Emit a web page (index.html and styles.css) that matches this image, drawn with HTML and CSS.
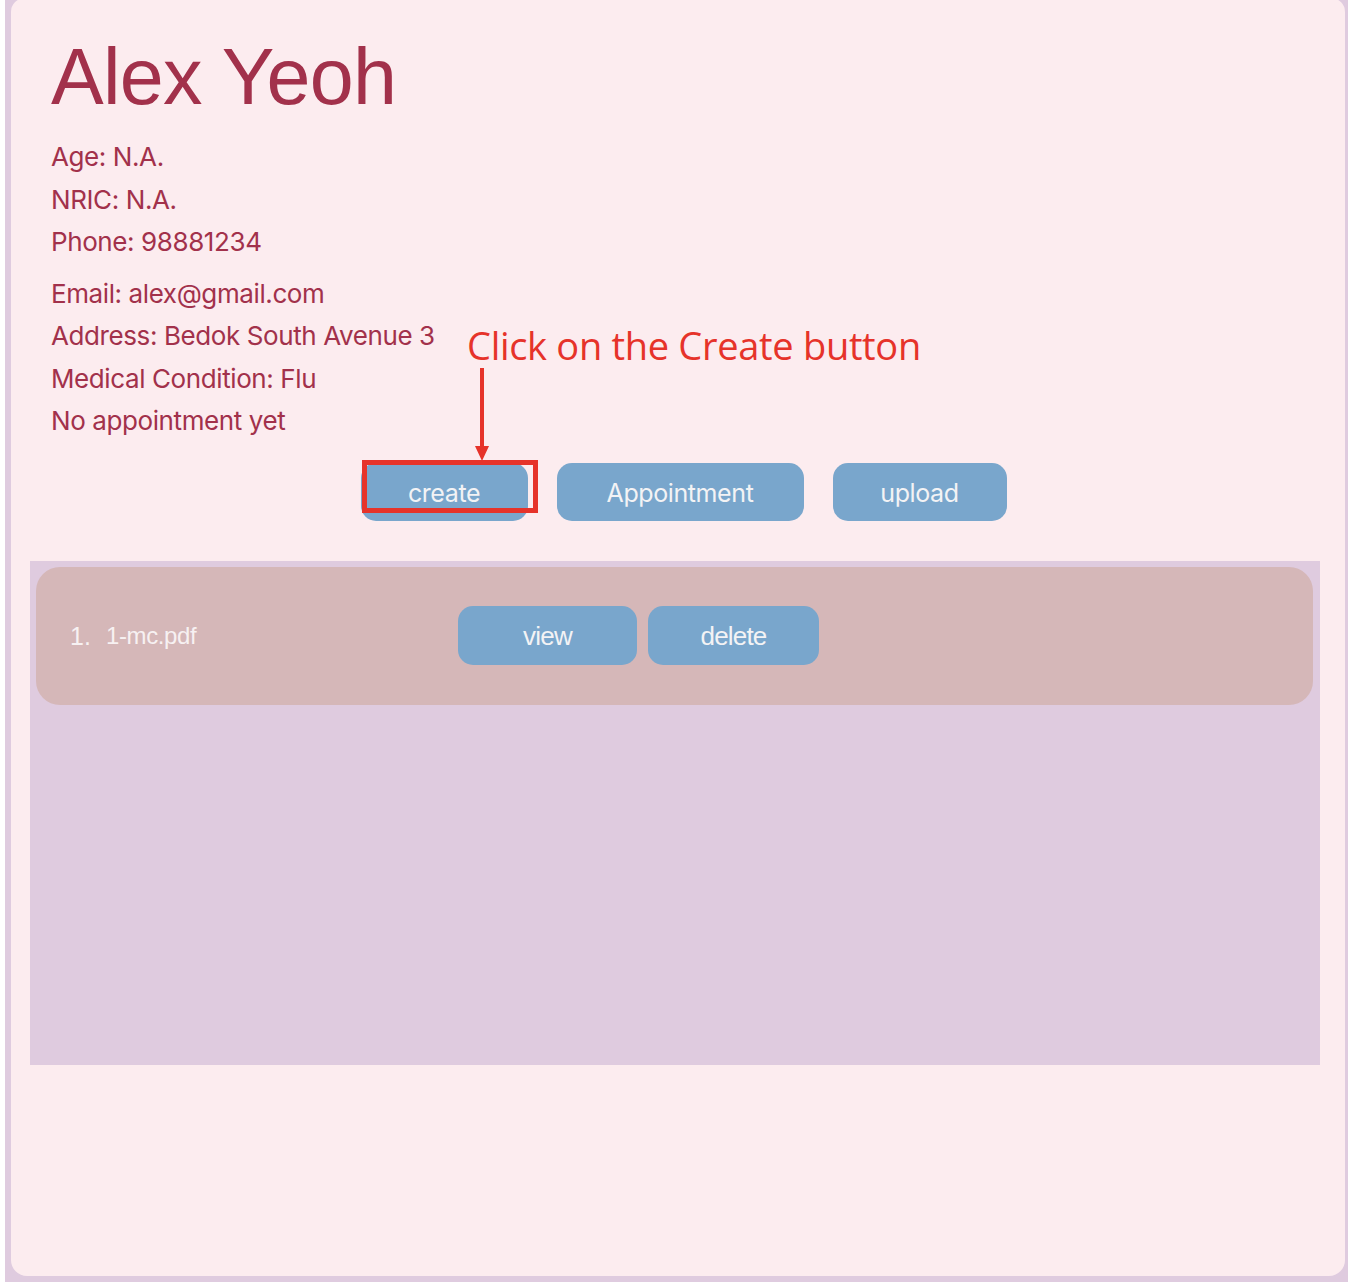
FILE: index.html
```html
<!DOCTYPE html>
<html lang="en">
<head>
<meta charset="utf-8">
<title>Alex Yeoh</title>
<link rel="stylesheet" href="styles.css">
</head>
<body>
<div class="frame">
  <div class="card">
    <header class="header">
      <h1 class="name">Alex Yeoh</h1>
      <div class="details">
        <div class="group">
          <p>Age: N.A.</p>
          <p>NRIC: N.A.</p>
          <p>Phone: 98881234</p>
        </div>
        <div class="group">
          <p>Email: alex@gmail.com</p>
          <p>Address: Bedok South Avenue 3</p>
          <p>Medical Condition: Flu</p>
          <p>No appointment yet</p>
        </div>
      </div>
      <div class="actions">
        <button class="btn btn-create">create</button>
        <button class="btn btn-appt">Appointment</button>
        <button class="btn btn-upload">upload</button>
      </div>
    </header>
    <section class="files">
      <div class="file-row">
        <span class="idx">1.</span>
        <span class="fname">1-mc.pdf</span>
        <div class="row-actions">
          <button class="rbtn rbtn-view">view</button>
          <button class="rbtn rbtn-delete">delete</button>
        </div>
      </div>
    </section>
  </div>
  <div class="annotation">
    <span class="note">Click on the Create button</span>
    <svg class="arrow" width="20" height="96" viewBox="0 0 20 96">
      <line x1="10" y1="0" x2="10" y2="82" stroke="#e6332a" stroke-width="4"/>
      <polygon points="3,78 17,78 10,93" fill="#e6332a"/>
    </svg>
    <div class="highlight"></div>
  </div>
</div>
</body>
</html>
```

FILE: styles.css
```css
html {
  background: #ffffff;
}
body {
  margin: 0 0 0 5px;
  background: #dfcbdf;
  height: 1282px;
  overflow: hidden;
}
.frame {
  position: relative;
  padding: 0 3px 0 6px;
}
.card {
  background: #fcecef;
  border-radius: 0 0 16px 16px;
  border-top-left-radius: 14px;
  border-top-right-radius: 14px;
  height: 1278px;
  box-sizing: border-box;
  padding: 0 25px 0 19px;
  margin-top: -2px;
}
.header {
  padding: 34px 0 0 21px;
}
.name {
  margin: 0;
  font-family: "Liberation Sans", Arial, sans-serif;
  font-weight: 400;
  font-size: 79px;
  line-height: 90px;
  letter-spacing: -0.7px;
  color: #a2314b;
}
.details {
  margin-top: 14px;
  font-family: Inter, "Noto Sans", sans-serif;
  font-size: 26px;
  letter-spacing: -0.4px;
  color: #a2314b;
}
.details p {
  margin: 0;
  line-height: 42.5px;
}
.group + .group {
  margin-top: 9px;
}
.actions {
  display: flex;
  justify-content: center;
  gap: 29px;
  padding-right: 4px;
  margin-top: 20px;
}
.btn {
  height: 58px;
  border: none;
  border-radius: 15px;
  background: #79a6cc;
  color: #f3f3f5;
  font-family: Inter, "Noto Sans", sans-serif;
  font-size: 25px;
  letter-spacing: -0.4px;
  padding: 2px 0 0;
}
.btn-create { width: 167px; }
.btn-appt { width: 247px; }
.btn-upload { width: 174px; }
.files {
  margin-top: 40px;
  height: 504px;
  background: #dfcbdf;
  padding: 6px 7px 0 6px;
  box-sizing: border-box;
}
.file-row {
  height: 138px;
  border-radius: 24px;
  background: #d5b7b8;
  display: flex;
  align-items: center;
  padding-left: 34px;
  color: #f7f1f2;
}
.idx {
  font-family: "Liberation Sans", Arial, sans-serif;
  font-size: 25px;
  width: 36px;
  padding-top: 2px;
}
.fname {
  font-family: "Liberation Sans", Arial, sans-serif;
  font-size: 24px;
  letter-spacing: -0.4px;
  width: 352px;
}
.row-actions {
  display: flex;
  gap: 11px;
  margin-top: 0;
}
.rbtn {
  height: 59px;
  border: none;
  border-radius: 15px;
  background: #79a6cc;
  color: #f3f3f5;
  font-family: "Liberation Sans", Arial, sans-serif;
  font-size: 26px;
  letter-spacing: -0.8px;
  padding: 2px 0 0;
}
.rbtn-view { width: 179px; }
.rbtn-delete { width: 171px; }
.annotation {
  position: absolute;
  left: 0;
  top: 0;
}
.note {
  position: absolute;
  left: 462px;
  top: 321px;
  white-space: nowrap;
  font-family: "Open Sans", sans-serif;
  font-size: 38px;
  letter-spacing: -0.3px;
  color: #e6332a;
}
.arrow {
  position: absolute;
  left: 467px;
  top: 370px;
}
.highlight {
  position: absolute;
  left: 357px;
  top: 462px;
  width: 176px;
  height: 53px;
  border: 5px solid #e6332a;
  box-sizing: border-box;
}
```
